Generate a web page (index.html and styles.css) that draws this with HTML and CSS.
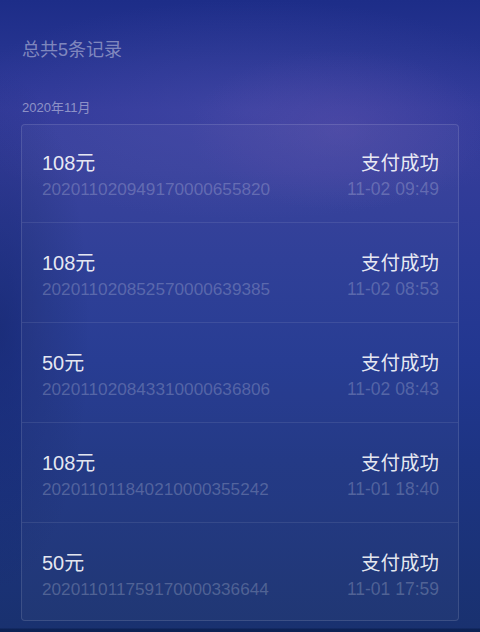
FILE: index.html
```html
<!DOCTYPE html>
<html lang="zh-CN">
<head>
<meta charset="utf-8">
<title>记录</title>
<link rel="stylesheet" href="styles.css">
</head>
<body>
<div class="page">
  <div class="total">总共5条记录</div>
  <div class="month">2020年11月</div>
  <div class="card">
    <div class="row">
      <div class="line"><span class="amount">108元</span><span class="status">支付成功</span></div>
      <div class="line sub"><span class="order">202011020949170000655820</span><span class="time">11-02 09:49</span></div>
    </div>
    <div class="row">
      <div class="line"><span class="amount">108元</span><span class="status">支付成功</span></div>
      <div class="line sub"><span class="order">202011020852570000639385</span><span class="time">11-02 08:53</span></div>
    </div>
    <div class="row">
      <div class="line"><span class="amount">50元</span><span class="status">支付成功</span></div>
      <div class="line sub"><span class="order">202011020843310000636806</span><span class="time">11-02 08:43</span></div>
    </div>
    <div class="row">
      <div class="line"><span class="amount">108元</span><span class="status">支付成功</span></div>
      <div class="line sub"><span class="order">202011011840210000355242</span><span class="time">11-01 18:40</span></div>
    </div>
    <div class="row">
      <div class="line"><span class="amount">50元</span><span class="status">支付成功</span></div>
      <div class="line sub"><span class="order">202011011759170000336644</span><span class="time">11-01 17:59</span></div>
    </div>
  </div>
</div>
</body>
</html>
```
FILE: styles.css
```css
html, body {
  margin: 0;
  padding: 0;
  height: 100%;
}
body {
  font-family: "Liberation Sans", "Noto Sans CJK SC", sans-serif;
  color: rgba(255, 255, 255, 0.9);
  background-color: #1b2f7e;
  background-image:
    linear-gradient(180deg, rgba(10, 30, 80, 0) 628px, rgba(12, 32, 82, 0.9) 629px),
    radial-gradient(ellipse 150px 80px at 340px 130px, rgba(105, 85, 175, 0.32), rgba(105, 85, 175, 0) 100%),
    radial-gradient(ellipse 300px 110px at 250px 110px, rgba(80, 82, 175, 0.38), rgba(80, 82, 175, 0) 100%),
    radial-gradient(ellipse 90px 260px at 0px 330px, rgba(18, 35, 100, 0.5), rgba(18, 35, 100, 0) 100%),
    linear-gradient(180deg, #1d2d88 0px, #25338f 50px, #323a9a 110px, #333c99 170px, #2a3a95 260px, #223790 360px, #1d3483 460px, #19316f 632px);
}
.page {
  padding: 38px 21px 0;
}
.total {
  font-size: 18px;
  line-height: 24px;
  color: rgba(255, 255, 255, 0.42);
  padding-left: 1px;
}
.month {
  margin-top: 37px;
  font-size: 13px;
  line-height: 18px;
  color: rgba(255, 255, 255, 0.45);
  padding-left: 1px;
}
.card {
  margin-top: 7px;
  border: 1px solid rgba(255, 255, 255, 0.12);
  border-radius: 4px;
  background: rgba(255, 255, 255, 0.03);
}
.row {
  padding: 27px 19px 21px 20px;
  border-bottom: 1px solid rgba(255, 255, 255, 0.09);
}
.row:first-child {
  padding-top: 25px;
}
.row:last-child {
  border-bottom: none;
  padding-bottom: 19px;
}
.line {
  display: flex;
  justify-content: space-between;
  align-items: baseline;
  height: 26px;
  font-size: 20px;
  line-height: 26px;
}
.amount, .status {
  color: rgba(255, 255, 255, 0.9);
}
.status {
  font-size: 19.5px;
}
.sub {
  margin-top: 1px;
  height: 24px;
  font-size: 17.2px;
  line-height: 24px;
  color: rgba(255, 255, 255, 0.22);
}
.time {
  font-size: 17.5px;
}
```
